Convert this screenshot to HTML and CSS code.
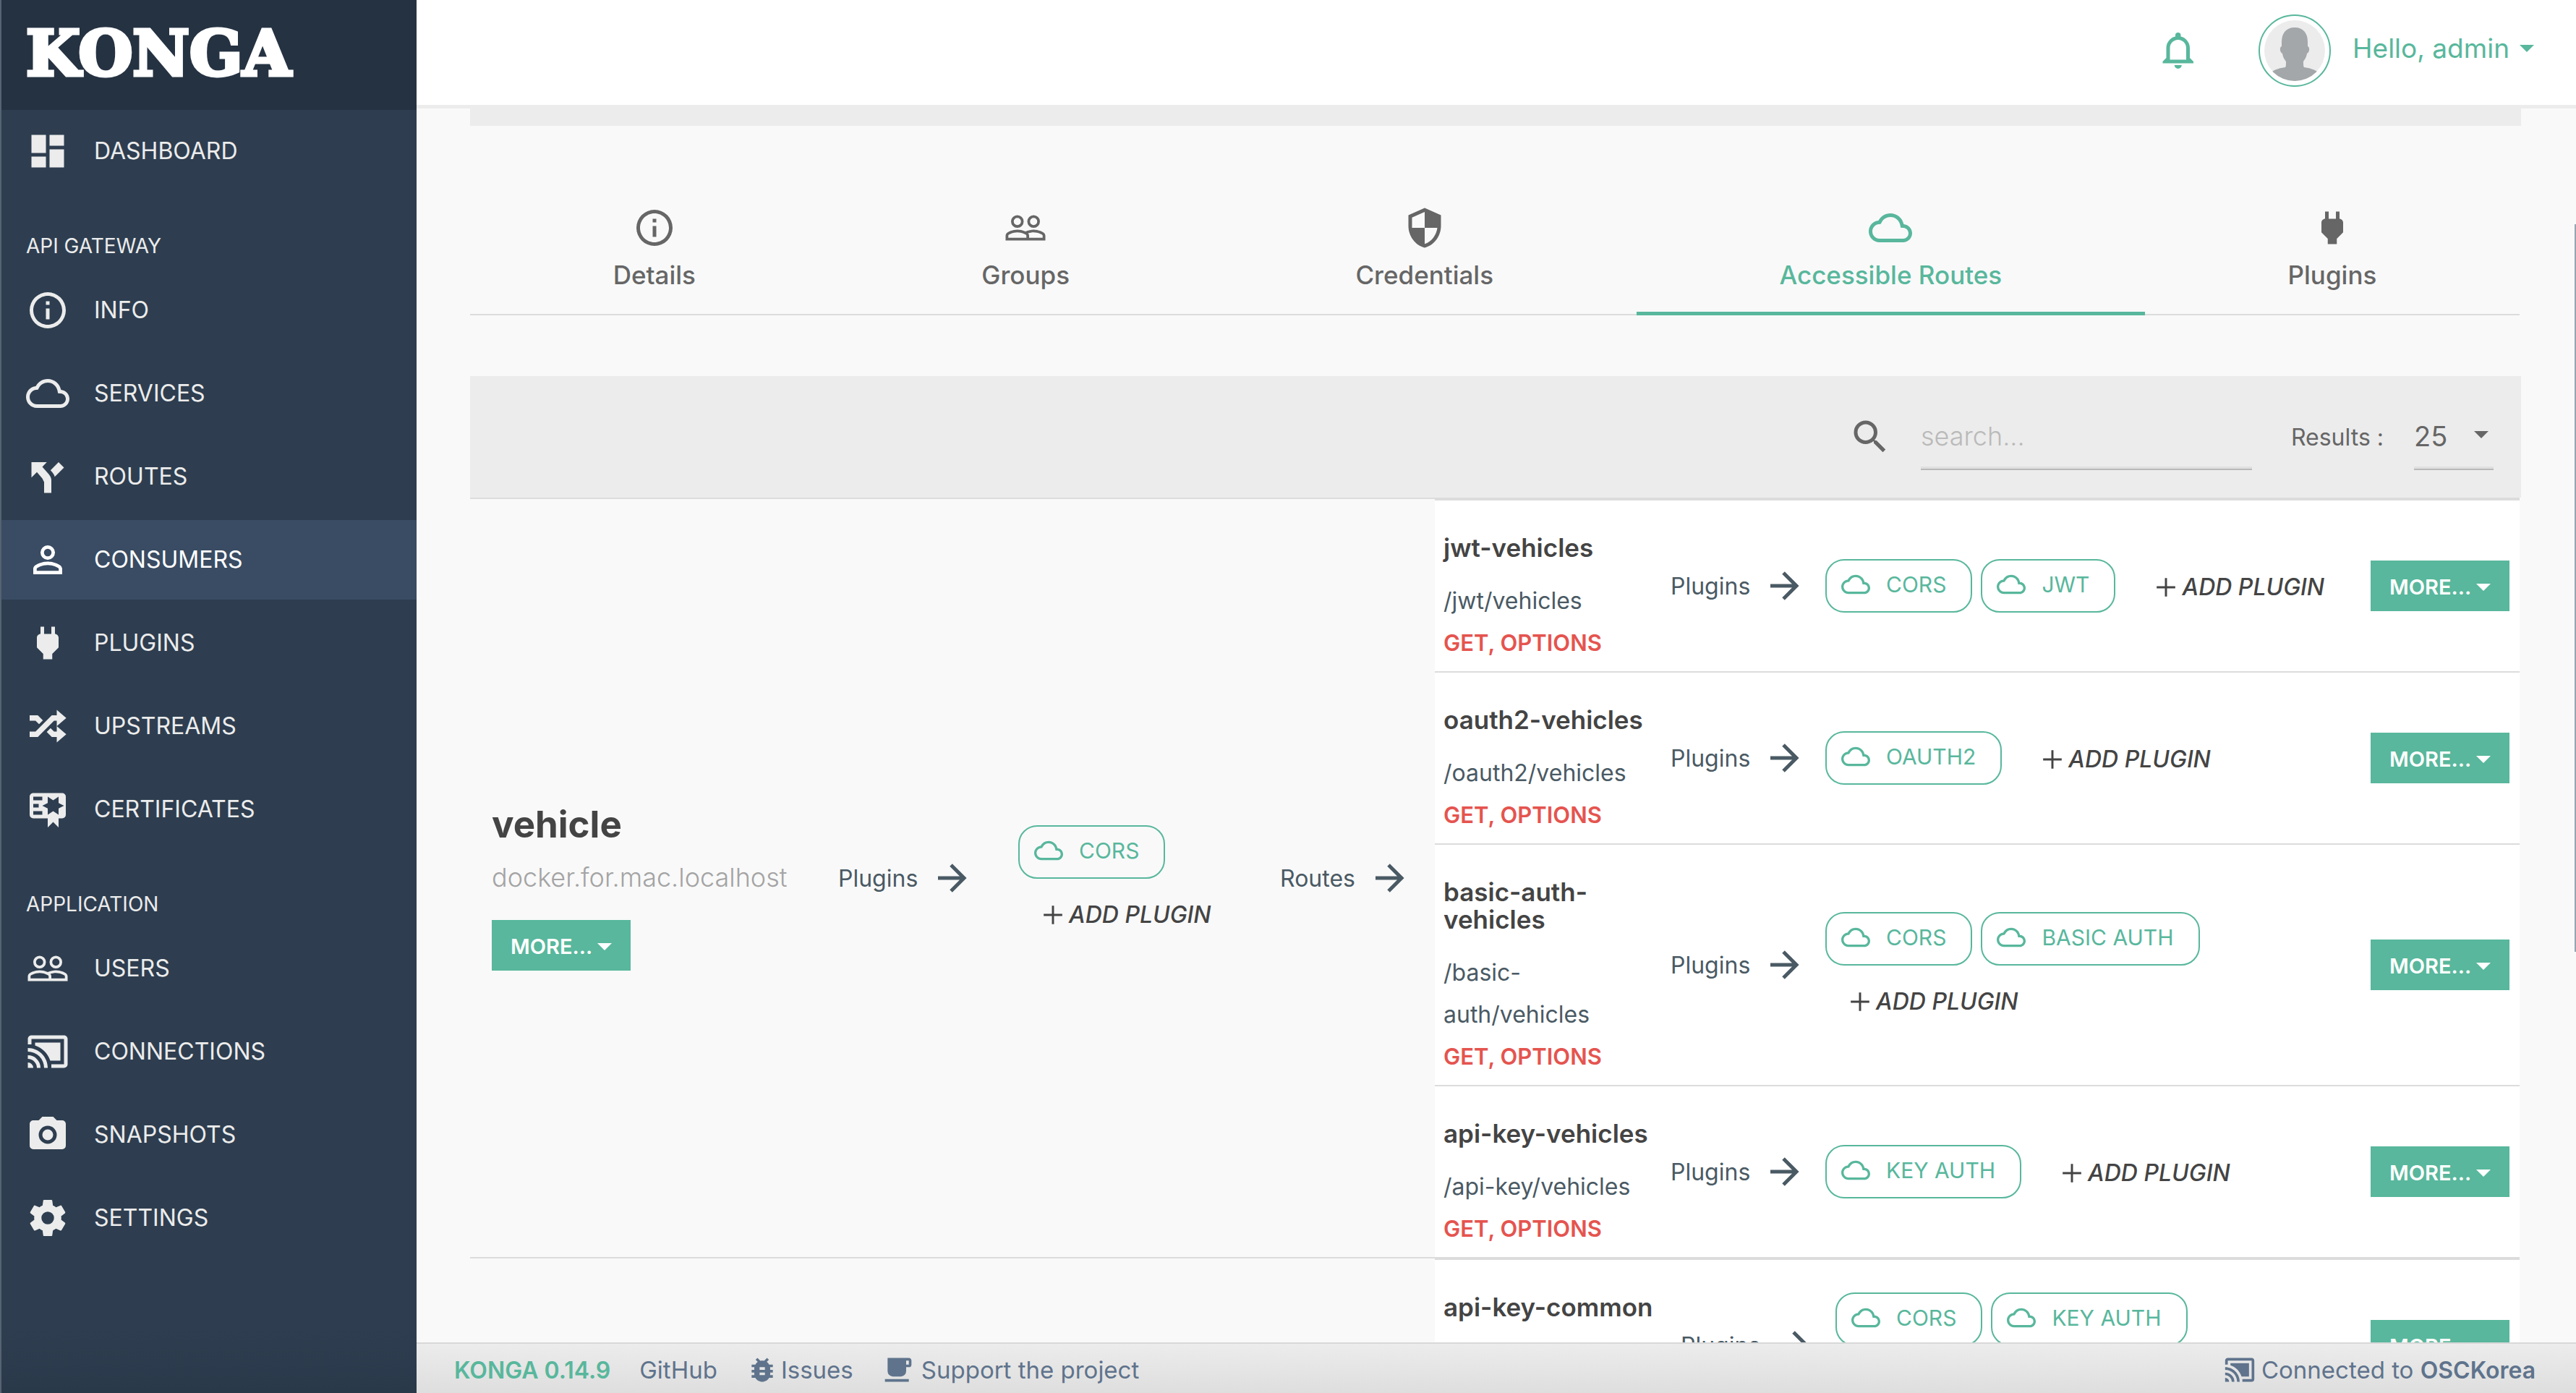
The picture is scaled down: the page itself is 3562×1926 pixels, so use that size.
FILE: index.html
```html
<!DOCTYPE html>
<html lang="en">
<head>
<meta charset="utf-8">
<meta name="viewport" content="width=device-width, initial-scale=1">
<title>KONGA</title>
<link rel="stylesheet" href="styles.css">
</head>
<body>
<svg class="sprite" aria-hidden="true">
  <symbol id="i-dashboard" viewBox="0 0 24 24"><path d="M13,3V9H21V3M13,21H21V11H13M3,21H11V15H3M3,13H11V3H3V13Z"/></symbol>
  <symbol id="i-info" viewBox="0 0 24 24"><path d="M11,9H13V7H11M12,20C7.59,20 4,16.41 4,12C4,7.59 7.59,4 12,4C16.41,4 20,7.59 20,12C20,16.41 16.41,20 12,20M12,2A10,10 0 0,0 2,12A10,10 0 0,0 12,22A10,10 0 0,0 22,12A10,10 0 0,0 12,2M11,17H13V11H11V17Z"/></symbol>
  <symbol id="i-cloud" viewBox="0 0 24 24"><path d="M19.35 10.04C18.67 6.59 15.64 4 12 4 9.11 4 6.6 5.64 5.35 8.04 2.34 8.36 0 10.91 0 14c0 3.31 2.69 6 6 6h13c2.76 0 5-2.24 5-5 0-2.64-2.05-4.78-4.65-4.96zM19 18H6c-2.21 0-4-1.79-4-4 0-2.05 1.53-3.76 3.56-3.97l1.07-.11.5-.95C8.08 7.14 9.94 6 12 6c2.62 0 4.88 1.86 5.39 4.43l.3 1.5 1.53.11c1.56.1 2.78 1.41 2.78 2.96 0 1.65-1.35 3-3 3z"/></symbol>
  <symbol id="i-fork" viewBox="0 0 24 24"><path d="M3,4V12.5L6,9.5L9,13L10,15V21H14V14C14,14 14,13 13.47,12C12.94,11 12,10 12,10L9,6.58L11.5,4M18,4L13.54,8.47L14,9C14,9 14.93,10 15.47,11C15.68,11.4 15.8,11.79 15.87,12.13L21,7"/></symbol>
  <symbol id="i-account" viewBox="0 0 24 24"><path d="M12,13C9.33,13 4,14.33 4,17V20H20V17C20,14.33 14.67,13 12,13M12,4A4,4 0 0,0 8,8A4,4 0 0,0 12,12A4,4 0 0,0 16,8A4,4 0 0,0 12,4M12,14.9C14.97,14.9 18.1,16.36 18.1,17V18.1H5.9V17C5.9,16.36 9,14.9 12,14.9M12,5.9A2.1,2.1 0 0,1 14.1,8A2.1,2.1 0 0,1 12,10.1A2.1,2.1 0 0,1 9.9,8A2.1,2.1 0 0,1 12,5.9Z"/></symbol>
  <symbol id="i-plug" viewBox="0 0 24 24"><path d="M16,7V3H14V7H10V3H8V7H8C7,7 6,8 6,9V14.5L9.5,18V21H14.5V18L18,14.5V9C18,8 17,7 16,7Z"/></symbol>
  <symbol id="i-shuffle" viewBox="0 0 24 24"><path d="M17,3L22.25,7.5L17,12L22.25,16.5L17,21V18H14.26L11.44,15.18L13.56,13.06L15.5,15H17V12L17,9H15.5L6.5,18H2V15H5.26L14.26,6H17V3M2,6H6.5L9.32,8.82L7.2,10.94L5.26,9H2V6Z"/></symbol>
  <symbol id="i-certificate" viewBox="0 0 24 24"><path d="M4,3C2.89,3 2,3.89 2,5V15A2,2 0 0,0 4,17H12V22L15,19L18,22V17H20A2,2 0 0,0 22,15V5A2,2 0 0,0 20,3H4M12,5L15,7L18,5V8.5L21,10L18,11.5V15L15,13L12,15V11.5L9,10L12,8.5V5M4,5H9V7H4V5M4,9H7V11H4V9M4,13H9V15H4V13Z"/></symbol>
  <symbol id="i-people" viewBox="0 0 24 24"><path d="M16.5,6.5A2,2 0 0,1 18.5,8.5A2,2 0 0,1 16.5,10.5A2,2 0 0,1 14.5,8.5A2,2 0 0,1 16.5,6.5M16.5,12A3.5,3.5 0 0,0 20,8.5A3.5,3.5 0 0,0 16.5,5A3.5,3.5 0 0,0 13,8.5A3.5,3.5 0 0,0 16.5,12M7.5,6.5A2,2 0 0,1 9.5,8.5A2,2 0 0,1 7.5,10.5A2,2 0 0,1 5.5,8.5A2,2 0 0,1 7.5,6.5M7.5,12A3.5,3.5 0 0,0 11,8.5A3.5,3.5 0 0,0 7.5,5A3.5,3.5 0 0,0 4,8.5A3.5,3.5 0 0,0 7.5,12M21.5,17.5H14V16.25C14,15.79 13.8,15.39 13.5,15.03C14.36,14.73 15.44,14.5 16.5,14.5C18.94,14.5 21.5,15.71 21.5,16.25M12.5,17.5H2.5V16.25C2.5,15.71 5.06,14.5 7.5,14.5C9.94,14.5 12.5,15.71 12.5,16.25M16.5,13C15.3,13 13.43,13.34 12,14C10.57,13.33 8.7,13 7.5,13C5.33,13 1,14.08 1,16.25V19H23V16.25C23,14.08 18.67,13 16.5,13Z"/></symbol>
  <symbol id="i-cast" viewBox="0 0 24 24"><path d="M21,3H3C1.89,3 1,3.89 1,5V8H3V5H21V19H14V21H21A2,2 0 0,0 23,19V5C23,3.89 22.1,3 21,3M1,10V12A9,9 0 0,1 10,21H12C12,14.92 7.07,10 1,10M19,7H5V8.63C8.96,9.91 12.09,13.04 13.37,17H19M1,14V16A5,5 0 0,1 6,21H8A7,7 0 0,0 1,14M1,18V21H4A3,3 0 0,0 1,18Z"/></symbol>
  <symbol id="i-camera" viewBox="0 0 24 24"><path d="M4,4H7L9,2H15L17,4H20A2,2 0 0,1 22,6V18A2,2 0 0,1 20,20H4A2,2 0 0,1 2,18V6A2,2 0 0,1 4,4M12,7A5,5 0 0,0 7,12A5,5 0 0,0 12,17A5,5 0 0,0 17,12A5,5 0 0,0 12,7M12,9A3,3 0 0,1 15,12A3,3 0 0,1 12,15A3,3 0 0,1 9,12A3,3 0 0,1 12,9Z"/></symbol>
  <symbol id="i-gear" viewBox="0 0 24 24"><path d="M12,15.5A3.5,3.5 0 0,1 8.5,12A3.5,3.5 0 0,1 12,8.5A3.5,3.5 0 0,1 15.5,12A3.5,3.5 0 0,1 12,15.5M19.43,12.97C19.47,12.65 19.5,12.33 19.5,12C19.5,11.67 19.47,11.34 19.43,11L21.54,9.37C21.73,9.22 21.78,8.95 21.66,8.73L19.66,5.27C19.54,5.05 19.27,4.96 19.05,5.05L16.56,6.05C16.04,5.66 15.5,5.32 14.87,5.07L14.5,2.42C14.46,2.18 14.25,2 14,2H10C9.75,2 9.54,2.18 9.5,2.42L9.13,5.07C8.5,5.32 7.96,5.66 7.44,6.05L4.95,5.05C4.73,4.96 4.46,5.05 4.34,5.27L2.34,8.73C2.21,8.95 2.27,9.22 2.46,9.37L4.57,11C4.53,11.34 4.5,11.67 4.5,12C4.5,12.33 4.53,12.65 4.57,12.97L2.46,14.63C2.27,14.78 2.21,15.05 2.34,15.27L4.34,18.73C4.46,18.95 4.73,19.03 4.95,18.95L7.44,17.94C7.96,18.34 8.5,18.68 9.13,18.93L9.5,21.58C9.54,21.82 9.75,22 10,22H14C14.25,22 14.46,21.82 14.5,21.58L14.87,18.93C15.5,18.67 16.04,18.34 16.56,17.94L19.05,18.95C19.27,19.03 19.54,18.95 19.66,18.73L21.66,15.27C21.78,15.05 21.73,14.78 21.54,14.63L19.43,12.97Z"/></symbol>
  <symbol id="i-shield" viewBox="0 0 24 24"><path d="M12,12H19C18.47,16.11 15.72,19.78 12,20.92V12H5V6.3L12,3.19M12,1L3,5V11C3,16.55 6.84,21.73 12,23C17.16,21.73 21,16.55 21,11V5L12,1Z"/></symbol>
  <symbol id="i-bug" viewBox="0 0 24 24"><path d="M14,12H10V10H14M14,16H10V14H14M20,8H17.19C16.74,7.22 16.12,6.55 15.37,6.04L17,4.41L15.59,3L13.42,5.17C12.96,5.06 12.5,5 12,5C11.5,5 11.04,5.06 10.59,5.17L8.41,3L7,4.41L8.62,6.04C7.88,6.55 7.26,7.22 6.81,8H4V10H6.09C6.04,10.33 6,10.66 6,11V12H4V14H6V15C6,15.34 6.04,15.67 6.09,16H4V18H6.81C7.85,19.79 9.78,21 12,21C14.22,21 16.15,19.79 17.19,18H20V16H17.91C17.96,15.67 18,15.34 18,15V14H20V12H18V11C18,10.66 17.96,10.33 17.91,10H20V8Z"/></symbol>
  <symbol id="i-cup" viewBox="0 0 24 24"><path d="M2,21H20V19H2M20,8H18V5H20M20,3H4V13A4,4 0 0,0 8,17H14A4,4 0 0,0 18,13V10H20A2,2 0 0,0 22,8V5C22,3.89 21.1,3 20,3Z"/></symbol>
  <symbol id="i-plus" viewBox="0 0 24 24"><path d="M19,12.8H12.8V19H11.2V12.8H5V11.2H11.2V5H12.8V11.2H19V12.8Z"/></symbol>
  <symbol id="i-arrow" viewBox="0 0 24 24"><path d="M4,11V13H16L10.5,18.5L11.92,19.92L19.84,12L11.92,4.08L10.5,5.5L16,11H4Z"/></symbol>
  <symbol id="i-search" viewBox="0 0 24 24"><path d="M9.5,3A6.5,6.5 0 0,1 16,9.5C16,11.11 15.41,12.59 14.44,13.73L14.71,14H15.5L20.5,19L19,20.5L14,15.5V14.71L13.73,14.44C12.59,15.41 11.11,16 9.5,16A6.5,6.5 0 0,1 3,9.5A6.5,6.5 0 0,1 9.5,3M9.5,5C7,5 5,7 5,9.5C5,12 7,14 9.5,14C12,14 14,12 14,9.5C14,7 12,5 9.5,5Z"/></symbol>
  <symbol id="i-bell" viewBox="0 0 24 24"><path d="M16,17H7V10.5C7,8 9,6 11.5,6C14,6 16,8 16,10.5M18,16V10.5C18,7.43 15.86,4.86 13,4.18V3.5A1.5,1.5 0 0,0 11.5,2A1.5,1.5 0 0,0 10,3.5V4.18C7.13,4.86 5,7.43 5,10.5V16L3,18V19H20V18M11.5,22A2,2 0 0,0 13.5,20H9.5A2,2 0 0,0 11.5,22Z"/></symbol>
</svg>

<div class="app">
  <aside class="sidebar">
    <a class="brand" href="#">KONGA</a>
    <nav class="nav">
      <ul class="nav-list">
        <li><a class="nav-item" href="#"><svg class="icon"><use href="#i-dashboard"/></svg>DASHBOARD</a></li>
      </ul>
      <h2 class="nav-label">API GATEWAY</h2>
      <ul class="nav-list">
        <li><a class="nav-item" href="#"><svg class="icon"><use href="#i-info"/></svg>INFO</a></li>
        <li><a class="nav-item" href="#"><svg class="icon"><use href="#i-cloud"/></svg>SERVICES</a></li>
        <li><a class="nav-item" href="#"><svg class="icon"><use href="#i-fork"/></svg>ROUTES</a></li>
        <li><a class="nav-item active" href="#"><svg class="icon"><use href="#i-account"/></svg>CONSUMERS</a></li>
        <li><a class="nav-item" href="#"><svg class="icon"><use href="#i-plug"/></svg>PLUGINS</a></li>
        <li><a class="nav-item" href="#"><svg class="icon"><use href="#i-shuffle"/></svg>UPSTREAMS</a></li>
        <li><a class="nav-item" href="#"><svg class="icon"><use href="#i-certificate"/></svg>CERTIFICATES</a></li>
      </ul>
      <h2 class="nav-label">APPLICATION</h2>
      <ul class="nav-list">
        <li><a class="nav-item" href="#"><svg class="icon"><use href="#i-people"/></svg>USERS</a></li>
        <li><a class="nav-item" href="#"><svg class="icon"><use href="#i-cast"/></svg>CONNECTIONS</a></li>
        <li><a class="nav-item" href="#"><svg class="icon"><use href="#i-camera"/></svg>SNAPSHOTS</a></li>
        <li><a class="nav-item" href="#"><svg class="icon"><use href="#i-gear"/></svg>SETTINGS</a></li>
      </ul>
    </nav>
  </aside>

  <div class="page">
    <header class="topbar">
      <button class="bell" type="button" aria-label="Notifications"><svg class="icon"><use href="#i-bell"/></svg></button>
      <button class="user" type="button">
        <svg class="avatar" viewBox="0 0 100 100" aria-hidden="true">
          <defs><clipPath id="face"><circle cx="50" cy="50" r="42"/></clipPath></defs>
          <circle cx="50" cy="50" r="49" fill="#fff" stroke="#58b79c" stroke-width="2"/>
          <circle cx="50" cy="50" r="42" fill="#ececec"/>
          <path clip-path="url(#face)" fill="#a3a7aa" d="M50 18C38 18 32 26 32 38V44C29 45 29 52 33 54C34 60 36 62 38 65C38 69 38 72 37 73C30 74 22 76 18 80V96H82V80C78 76 70 74 63 73C62 72 62 69 62 65C64 62 66 60 67 54C71 52 71 45 68 44V38C68 26 62 18 50 18Z"/>
        </svg>
        <span class="user-name">Hello, admin<span class="caret"></span></span>
      </button>
    </header>

    <main class="content">
      <div class="strip"></div>
      <nav class="tabs">
        <a class="tab" href="#"><svg class="icon"><use href="#i-info"/></svg>Details</a>
        <a class="tab" href="#"><svg class="icon"><use href="#i-people"/></svg>Groups</a>
        <a class="tab" href="#"><svg class="icon"><use href="#i-shield"/></svg>Credentials</a>
        <a class="tab active" href="#"><svg class="icon"><use href="#i-cloud"/></svg>Accessible Routes</a>
        <a class="tab" href="#"><svg class="icon"><use href="#i-plug"/></svg>Plugins</a>
      </nav>

      <form class="toolbar">
        <label class="search-label" for="search" aria-label="Search"><svg class="icon"><use href="#i-search"/></svg></label>
        <input class="search" id="search" type="text" placeholder="search...">
        <label class="results-label" for="results">Results :</label>
        <span class="select-wrap"><select id="results"><option>25</option><option>50</option><option>100</option></select></span>
      </form>

      <table class="services">
        <colgroup><col class="c-service"><col class="c-plugins"><col class="c-tags"><col class="c-routes"><col></colgroup>
        <tbody>
        <tr>
          <td class="service">
            <h3>vehicle</h3>
            <p>docker.for.mac.localhost</p>
            <button class="more" type="button">MORE...<span class="caret"></span></button>
          </td>
          <td><span class="flow">Plugins<svg class="icon"><use href="#i-arrow"/></svg></span></td>
          <td>
            <div class="tags">
              <div class="pills"><a class="pill" href="#"><svg class="icon"><use href="#i-cloud"/></svg>CORS</a></div>
              <button class="add" type="button"><svg class="icon"><use href="#i-plus"/></svg>ADD PLUGIN</button>
            </div>
          </td>
          <td><span class="flow">Routes<svg class="icon"><use href="#i-arrow"/></svg></span></td>
          <td class="nested">
            <table class="routes">
              <colgroup><col class="r-name"><col class="r-plugins"><col><col class="r-more"></colgroup>
              <tbody>
              <tr>
                <td class="route"><h4>jwt-vehicles</h4><p>/jwt/vehicles</p><p class="methods">GET, OPTIONS</p></td>
                <td><span class="flow">Plugins<svg class="icon"><use href="#i-arrow"/></svg></span></td>
                <td><div class="tags">
                  <div class="pills"><a class="pill" href="#"><svg class="icon"><use href="#i-cloud"/></svg>CORS</a><a class="pill" href="#"><svg class="icon"><use href="#i-cloud"/></svg>JWT</a></div>
                  <button class="add" type="button"><svg class="icon"><use href="#i-plus"/></svg>ADD PLUGIN</button>
                </div></td>
                <td><button class="more" type="button">MORE...<span class="caret"></span></button></td>
              </tr>
              <tr>
                <td class="route"><h4>oauth2-vehicles</h4><p>/oauth2/vehicles</p><p class="methods">GET, OPTIONS</p></td>
                <td><span class="flow">Plugins<svg class="icon"><use href="#i-arrow"/></svg></span></td>
                <td><div class="tags">
                  <div class="pills"><a class="pill" href="#"><svg class="icon"><use href="#i-cloud"/></svg>OAUTH2</a></div>
                  <button class="add" type="button"><svg class="icon"><use href="#i-plus"/></svg>ADD PLUGIN</button>
                </div></td>
                <td><button class="more" type="button">MORE...<span class="caret"></span></button></td>
              </tr>
              <tr>
                <td class="route"><h4>basic-auth-<wbr>vehicles</h4><p>/basic-<span class="keep">auth/vehicles</span></p><p class="methods">GET, OPTIONS</p></td>
                <td><span class="flow">Plugins<svg class="icon"><use href="#i-arrow"/></svg></span></td>
                <td><div class="tags">
                  <div class="pills"><a class="pill" href="#"><svg class="icon"><use href="#i-cloud"/></svg>CORS</a><a class="pill" href="#"><svg class="icon"><use href="#i-cloud"/></svg>BASIC AUTH</a></div>
                  <button class="add" type="button"><svg class="icon"><use href="#i-plus"/></svg>ADD PLUGIN</button>
                </div></td>
                <td><button class="more" type="button">MORE...<span class="caret"></span></button></td>
              </tr>
              <tr>
                <td class="route"><h4>api-key-vehicles</h4><p>/api-key/vehicles</p><p class="methods">GET, OPTIONS</p></td>
                <td><span class="flow">Plugins<svg class="icon"><use href="#i-arrow"/></svg></span></td>
                <td><div class="tags">
                  <div class="pills"><a class="pill" href="#"><svg class="icon"><use href="#i-cloud"/></svg>KEY AUTH</a></div>
                  <button class="add" type="button"><svg class="icon"><use href="#i-plus"/></svg>ADD PLUGIN</button>
                </div></td>
                <td><button class="more" type="button">MORE...<span class="caret"></span></button></td>
              </tr>
              </tbody>
            </table>
          </td>
        </tr>
        <tr>
          <td class="service"></td>
          <td></td>
          <td></td>
          <td></td>
          <td class="nested">
            <table class="routes routes-wide">
              <colgroup><col class="r-name"><col class="r-plugins"><col><col class="r-more"></colgroup>
              <tbody>
              <tr>
                <td class="route"><h4>api-key-common</h4></td>
                <td><span class="flow">Plugins<svg class="icon"><use href="#i-arrow"/></svg></span></td>
                <td><div class="tags">
                  <div class="pills"><a class="pill" href="#"><svg class="icon"><use href="#i-cloud"/></svg>CORS</a><a class="pill" href="#"><svg class="icon"><use href="#i-cloud"/></svg>KEY AUTH</a></div>
                </div></td>
                <td><button class="more" type="button">MORE...<span class="caret"></span></button></td>
              </tr>
              </tbody>
            </table>
          </td>
        </tr>
        </tbody>
      </table>
      <div class="scroll-thumb"></div>
    </main>

    <footer class="footer">
      <a class="version" href="#">KONGA 0.14.9</a>
      <a href="#">GitHub</a>
      <a class="issues" href="#"><svg class="icon"><use href="#i-bug"/></svg>Issues</a>
      <a class="support" href="#"><svg class="icon"><use href="#i-cup"/></svg>Support the project</a>
      <span class="connected"><svg class="icon"><use href="#i-cast"/></svg><span>Connected to <b>OSCKorea</b></span></span>
    </footer>
  </div>
</div>
</body>
</html>
```
FILE: styles.css
```css
* {
  box-sizing: border-box;
}

body {
  margin: 0;
  font-family: Inter, "Liberation Sans", sans-serif;
  font-size: 32px;
  font-weight: 400;
  color: #4a5a64;
  background: #f9f9f9;
}

h2, h3, h4, p, ul {
  margin: 0;
  padding: 0;
}

ul {
  list-style: none;
}

a {
  color: inherit;
  text-decoration: none;
}

button, input, select {
  margin: 0;
  padding: 0;
  border: 0;
  background: none;
  font: inherit;
  color: inherit;
}

.sprite {
  display: none;
}

.icon {
  flex: none;
  width: 60px;
  height: 60px;
  fill: currentColor;
  fill-rule: evenodd;
}

.caret {
  flex: none;
  border: 10px solid transparent;
  border-top-color: currentColor;
  border-bottom: 0;
}

.app {
  display: grid;
  grid-template-columns: 576px minmax(0, 1fr);
  height: 100vh;
  overflow: hidden;
}

/* Sidebar */

.sidebar {
  color: #ececec;
  border-left: 2px solid #566373;
  background: linear-gradient(#2e3e50 calc(100% - 90px), #2a394a);
}

.brand {
  display: flex;
  align-items: center;
  height: 152px;
  padding: 0 34px 4px;
  font-family: "DejaVu Serif", serif;
  font-size: 86px;
  font-weight: 700;
  line-height: 100px;
  color: #fff;
  background: #253242;
  -webkit-text-stroke: 5px #fff;
}

.nav {
  padding-top: 2px;
}

.nav-list {
  display: flex;
  flex-direction: column;
  gap: 5px;
}

.nav-item {
  display: flex;
  align-items: center;
  gap: 34px;
  height: 110px;
  padding: 0 34px;
  line-height: 40px;
}

.nav-item.active {
  color: #fff;
  background: #394c63;
}

.nav-label {
  height: 110px;
  padding: 56px 34px 0;
  font-size: 28px;
  font-weight: 400;
  line-height: 40px;
}

/* Page frame */

.page {
  display: grid;
  grid-template-rows: 150px minmax(0, 1fr) 70px;
  min-width: 0;
  min-height: 0;
}

.topbar {
  display: flex;
  align-items: center;
  justify-content: flex-end;
  gap: 80px;
  padding: 0 58px 5px 0;
  color: #58b79c;
  background: #fff;
  border-bottom: 5px solid #ececec;
}

.bell, .user {
  display: flex;
  align-items: center;
}

.user {
  gap: 30px;
  font-size: 37px;
  line-height: 44px;
}

.user-name {
  display: flex;
  align-items: center;
  gap: 14px;
  padding-bottom: 6px;
}

.avatar {
  width: 100px;
  height: 100px;
}

.content {
  position: relative;
  padding: 0 76px 0 74px;
  overflow: hidden;
}

.scroll-thumb {
  position: absolute;
  top: 160px;
  right: 0;
  width: 2px;
  height: 1006px;
  background: #97a5b2;
}

.strip {
  height: 24px;
  background: #ececec;
}

/* Tabs */

.tabs {
  display: flex;
  margin: 86px 2px 0 0;
  border-bottom: 2px solid #dcdcdc;
}

.tab {
  display: flex;
  flex: 1 1 auto;
  flex-direction: column;
  align-items: center;
  gap: 10px;
  padding: 25px 40px 26px;
  margin-bottom: -2px;
  border-bottom: 5px solid transparent;
  font-size: 35px;
  font-weight: 500;
  line-height: 50px;
  color: #666;
}

.tab.active {
  color: #58b79c;
  border-bottom-color: #58b79c;
}

/* Toolbar */

.toolbar {
  display: flex;
  align-items: center;
  justify-content: flex-end;
  height: 168px;
  margin-top: 84px;
  padding: 0 38px;
  color: #666;
  background: #ececec;
}

.search-label {
  display: flex;
  margin-right: 40px;
}

.search, .select-wrap {
  height: 92px;
  border-bottom: 2px solid #b9b9b9;
  box-shadow: inset 0 -3px 0 #dfdfdf;
}

.search {
  width: 458px;
  font-size: 36px;
  outline: 0;
}

.search::placeholder {
  color: #bababa;
  font-weight: 300;
  opacity: 1;
}

.results-label {
  margin: 0 42px 0 54px;
}

.select-wrap {
  position: relative;
  width: 110px;
}

.select-wrap::after {
  content: "";
  position: absolute;
  top: 38px;
  right: 7px;
  border: 10px solid transparent;
  border-top-color: #666;
  border-bottom: 0;
  pointer-events: none;
}

.select-wrap select {
  width: 100%;
  height: 90px;
  appearance: none;
  font-size: 38px;
}

/* Services and their routes */

.services, .routes {
  table-layout: fixed;
  border-spacing: 0;
}

.services {
  width: calc(100% - 2px);
  border-top: 2px solid #dcdcdc;
}

.routes {
  width: 100%;
  background: #fff;
}

.c-service { width: 497px; }
.c-plugins { width: 249px; }
.c-tags { width: 362px; }
.c-routes { width: 226px; }
.r-name { width: 314px; }
.r-plugins { width: 214px; }
.r-more { width: 218px; }
.routes-wide .r-name { width: 328px; }

td {
  padding: 0 12px;
  vertical-align: middle;
}

.services > tbody > tr > td {
  border-bottom: 2px solid #dcdcdc;
}

.routes td {
  border-top: 2px solid #dcdcdc;
}

.routes tr {
  height: 238px;
}

.services .nested {
  padding: 0;
}

.services .service {
  padding: 24px 12px 0 30px;
}

.service h3 {
  margin-bottom: 14px;
  font-size: 51px;
  font-weight: 700;
  line-height: 60px;
  color: #444;
}

.service p {
  margin-bottom: 30px;
  font-size: 36px;
  font-weight: 300;
  line-height: 58px;
  color: #a4a4a4;
}

.routes .route {
  padding: 46px 12px 10px;
  vertical-align: top;
}

.route h4 {
  margin-bottom: 26px;
  font-size: 35px;
  font-weight: 600;
  line-height: 38px;
  color: #444;
}

.route p {
  line-height: 58px;
}

.route .methods {
  font-size: 31px;
  font-weight: 600;
  color: #e5544f;
}

.keep {
  white-space: nowrap;
}

.flow {
  display: flex;
  align-items: center;
  gap: 18px;
}

.tags {
  display: flex;
  flex-wrap: wrap;
  align-items: center;
  gap: 24px 22px;
}

.routes-wide .tags {
  padding-bottom: 72px;
}

.pills {
  display: flex;
  gap: 12px;
}

.pill {
  display: flex;
  align-items: center;
  gap: 22px;
  height: 74px;
  padding: 0 34px 4px 20px;
  border: 2px solid #58b79c;
  border-radius: 26px;
  font-size: 30px;
  line-height: 40px;
  color: #58b79c;
}

.pill .icon {
  width: 40px;
  height: 40px;
}

.add {
  display: flex;
  align-items: center;
  padding: 3px 0 0 26px;
  font-size: 32px;
  font-style: italic;
  font-weight: 500;
  line-height: 46px;
  color: #444;
}

.add .icon {
  width: 44px;
  height: 44px;
}

.more {
  display: flex;
  align-items: center;
  justify-content: space-between;
  width: 192px;
  height: 70px;
  padding: 3px 26px 0;
  font-size: 29px;
  font-weight: 600;
  color: #fff;
  background: #58b79c;
}

/* Footer */

.footer {
  position: relative;
  display: flex;
  align-items: center;
  gap: 40px;
  padding: 4px 56px 0 52px;
  font-size: 33px;
  color: #5f738c;
  background: linear-gradient(#ececec, #dedede);
  border-top: 2px solid #d8d8d8;
}

.footer a, .connected {
  display: flex;
  align-items: center;
  gap: 4px;
}

.footer .version {
  font-size: 32px;
  font-weight: 600;
  color: #58b79c;
}

.footer .support {
  gap: 10px;
}

.footer .icon {
  width: 44px;
  height: 44px;
}

.footer b {
  font-size: 32px;
  font-weight: 600;
}

.footer .connected {
  gap: 8px;
  margin-left: auto;
}
```
